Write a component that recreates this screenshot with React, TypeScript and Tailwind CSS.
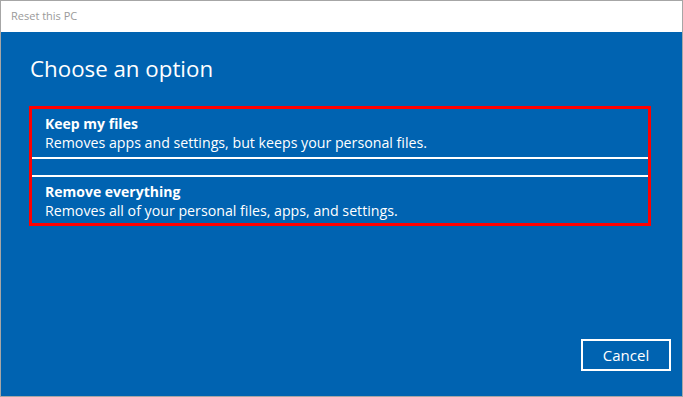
export default function App() {
  return (
    <div className="w-[683px] h-[397px] border border-[#a6a6a6] flex flex-col bg-white font-['Open_Sans',sans-serif] overflow-hidden">
      {/* title bar */}
      <div className="h-[31px] shrink-0 flex items-center pl-[10px] text-[11px] text-[#9a9a9a]">
        Reset this PC
      </div>

      {/* content */}
      <div className="flex-1 bg-[#0063b1] flex flex-col text-white">
        <h1 className="ml-[29px] mt-[21px] text-[22.3px] leading-[32px] font-normal">Choose an option</h1>

        <div className="ml-[28px] mt-[21px] w-[622px] border-[3px] border-[#ff0000] flex flex-col">
          <OptionRow title="Keep my files" desc="Removes apps and settings, but keeps your personal files." className="h-[48px] pt-[6px]" />
          <div className="h-[2px] bg-white" />
          <div className="h-[16px]" />
          <div className="h-[2px] bg-white" />
          <OptionRow title="Remove everything" desc="Removes all of your personal files, apps, and settings." className="h-[46px] pt-[6px]" />
        </div>

        <div className="mt-auto flex justify-end pr-[11px] pb-[25px]">
          <button className="w-[90px] h-[32px] border-2 border-white text-[15px] text-white">Cancel</button>
        </div>
      </div>
    </div>
  )
}

function OptionRow({ title, desc, className }: { title: string; desc: string; className: string }) {
  return (
    <div className={`pl-[13px] ${className}`}>
      <p className="text-[14px] leading-[18px] font-bold">{title}</p>
      <p className="text-[14.2px] leading-[20px]">{desc}</p>
    </div>
  )
}
